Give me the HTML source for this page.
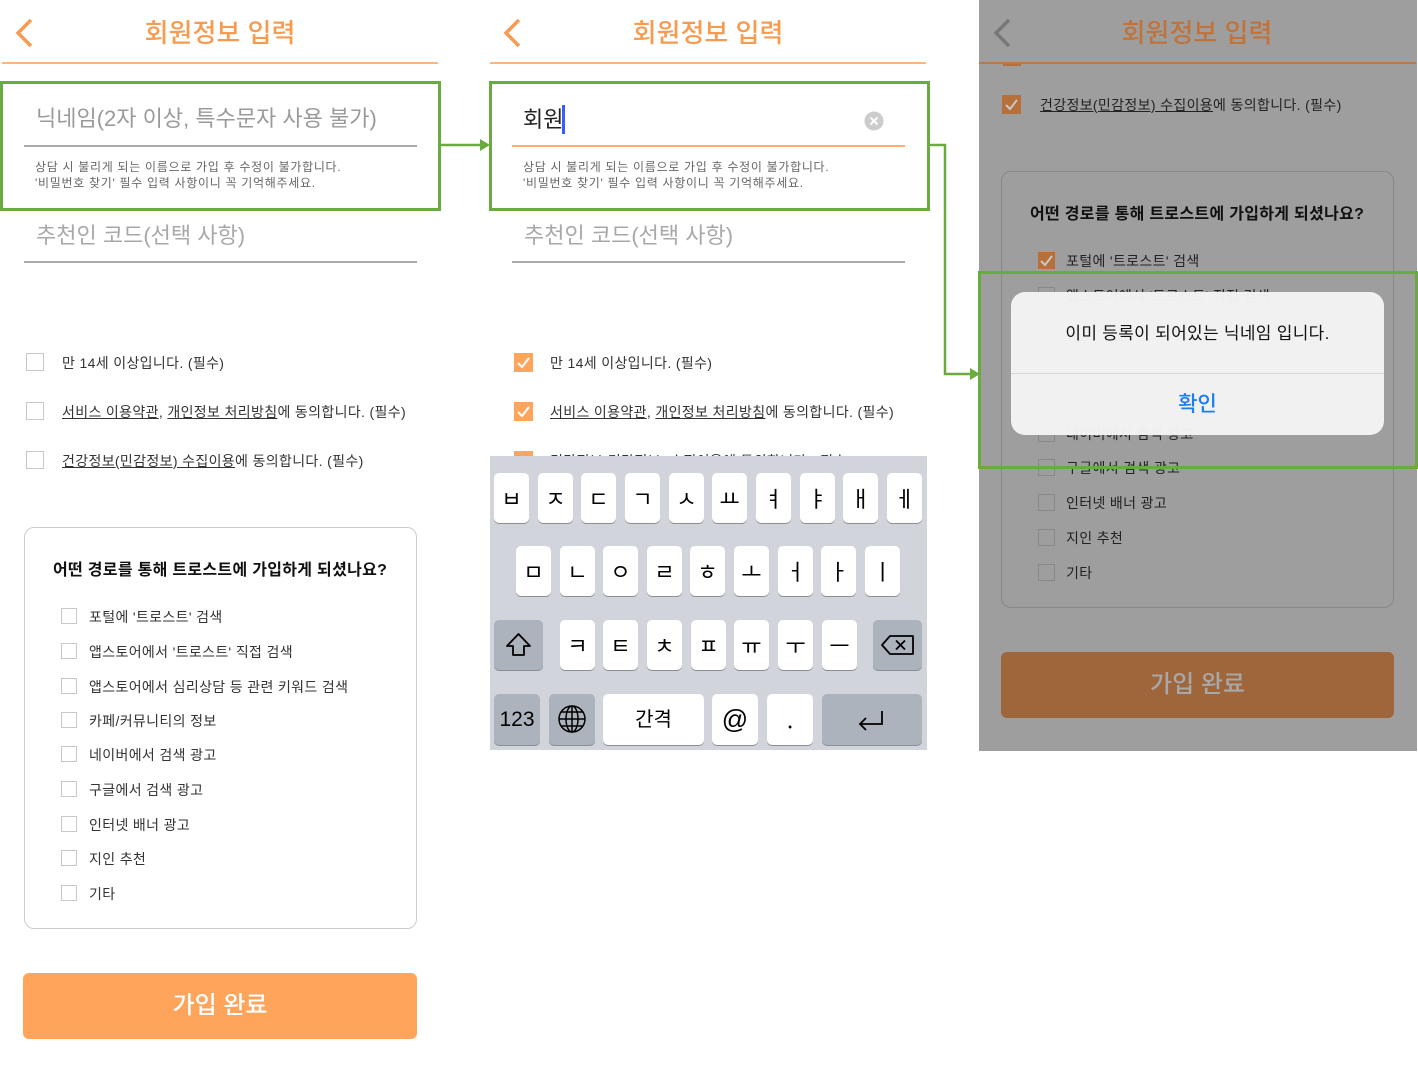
<!DOCTYPE html>
<html><head><meta charset="utf-8">
<style>
*{margin:0;padding:0;box-sizing:border-box}
body{width:1418px;height:1072px;background:#fff;position:relative;overflow:hidden;font-family:"Liberation Sans","Noto Sans CJK KR",sans-serif}
.a{position:absolute;white-space:nowrap}
.cb{position:absolute;width:18px;height:18px;border:1.5px solid #c8c8c8;background:#fff}
.cs{position:absolute;width:16px;height:16px;border:1.5px solid #c8c8c8;background:#fff}
.ck{position:absolute;background:#ffa55b}
.ck svg,.ckd svg{position:absolute;left:0;top:0}
.ckd{position:absolute;background:#b8703a}
.k{position:absolute;background:#fff;border-radius:5px;box-shadow:0 1px 0 #8a8d92;height:50px;width:35px;text-align:center;line-height:50px;font-size:22px;color:#000;font-family:"Noto Sans CJK KR",sans-serif}
.g{background:#adb3bc}
u{text-decoration:underline}
.t14{font-size:14px;line-height:20px;letter-spacing:0.35px}
.h12{font-size:12px;line-height:16px;color:#666;letter-spacing:0.7px}
</style></head><body>

<!-- PANEL 1 -->
<svg class="a" style="left:10px;top:14px" width="30" height="40"><polyline points="21,6 8,19 21,32" fill="none" stroke="#f79a52" stroke-width="3.5"/></svg>
<div class="a" style="left:0;top:16px;width:440px;text-align:center;font-size:26px;line-height:34px;color:#f89b4f;font-weight:500">회원정보 입력</div>
<div class="a" style="left:2px;top:62px;width:436px;height:2px;background:#fbb57f"></div>
<div class="a" style="left:36px;top:104px;font-size:22px;line-height:30px;color:#9a9a9a">닉네임(2자 이상, 특수문자 사용 불가)</div>
<div class="a" style="left:24px;top:145px;width:393px;height:1.5px;background:#aaa"></div>
<div class="a h12" style="left:35px;top:159px">상담 시 불리게 되는 이름으로 가입 후 수정이 불가합니다.<br>'비밀번호 찾기' 필수 입력 사항이니 꼭 기억해주세요.</div>
<div class="a" style="left:0;top:81px;width:441px;height:130px;border:3px solid #6aab3f"></div>
<div class="a" style="left:36px;top:221px;font-size:22px;line-height:30px;color:#a8a8a8">추천인 코드(선택 사항)</div>
<div class="a" style="left:24px;top:261px;width:393px;height:1.5px;background:#aaa"></div>

<div class="cb" style="left:26px;top:353px"></div>
<div class="a t14" style="left:62px;top:353px;color:#333">만 14세 이상입니다. (필수)</div>
<div class="cb" style="left:26px;top:402px"></div>
<div class="a t14" style="left:62px;top:402px;color:#333"><u>서비스 이용약관</u>, <u>개인정보 처리방침</u>에 동의합니다. (필수)</div>
<div class="cb" style="left:26px;top:451px"></div>
<div class="a t14" style="left:62px;top:451px;color:#333"><u>건강정보(민감정보) 수집이용</u>에 동의합니다. (필수)</div>

<div class="a" style="left:24px;top:527px;width:393px;height:402px;border:1.5px solid #ccc;border-radius:10px"></div>
<div class="a" style="left:53px;top:560px;font-size:16px;line-height:22px;color:#111;font-weight:bold;letter-spacing:0.3px">어떤 경로를 통해 트로스트에 가입하게 되셨나요?</div>
<div class="cs" style="left:61px;top:608px"></div><div class="a t14" style="left:89px;top:607px;color:#333">포털에 '트로스트' 검색</div>
<div class="cs" style="left:61px;top:643px"></div><div class="a t14" style="left:89px;top:642px;color:#333">앱스토어에서 '트로스트' 직접 검색</div>
<div class="cs" style="left:61px;top:678px"></div><div class="a t14" style="left:89px;top:677px;color:#333">앱스토어에서 심리상담 등 관련 키워드 검색</div>
<div class="cs" style="left:61px;top:712px"></div><div class="a t14" style="left:89px;top:711px;color:#333">카페/커뮤니티의 정보</div>
<div class="cs" style="left:61px;top:746px"></div><div class="a t14" style="left:89px;top:745px;color:#333">네이버에서 검색 광고</div>
<div class="cs" style="left:61px;top:781px"></div><div class="a t14" style="left:89px;top:780px;color:#333">구글에서 검색 광고</div>
<div class="cs" style="left:61px;top:816px"></div><div class="a t14" style="left:89px;top:815px;color:#333">인터넷 배너 광고</div>
<div class="cs" style="left:61px;top:850px"></div><div class="a t14" style="left:89px;top:849px;color:#333">지인 추천</div>
<div class="cs" style="left:61px;top:885px"></div><div class="a t14" style="left:89px;top:884px;color:#333">기타</div>

<div class="a" style="left:23px;top:973px;width:394px;height:66px;background:#ffa55b;border-radius:6px;text-align:center;line-height:66px;font-size:24px;color:#fff;font-weight:500">가입 완료</div>

<!-- arrows -->
<svg class="a" style="left:0;top:0" width="1418" height="1072">
<line x1="441" y1="145" x2="482" y2="145" stroke="#6aab3f" stroke-width="2.5"/>
<polygon points="480,139 490,145 480,151" fill="#6aab3f"/>
<polyline points="930,145 945,145 945,374 972,374" fill="none" stroke="#6aab3f" stroke-width="2.5"/>
<polygon points="970,368 980,374 970,380" fill="#6aab3f"/>
</svg>

<!-- PANEL 2 -->
<svg class="a" style="left:498px;top:14px" width="30" height="40"><polyline points="21,6 8,19 21,32" fill="none" stroke="#f79a52" stroke-width="3.5"/></svg>
<div class="a" style="left:488px;top:16px;width:440px;text-align:center;font-size:26px;line-height:34px;color:#f89b4f;font-weight:500">회원정보 입력</div>
<div class="a" style="left:490px;top:62px;width:436px;height:2px;background:#fbb57f"></div>
<div class="a" style="left:523px;top:105px;font-size:22px;line-height:30px;color:#222">회원</div>
<div class="a" style="left:562px;top:105px;width:2.5px;height:29px;background:#3a5cff"></div>
<svg class="a" style="left:864px;top:111px" width="20" height="20"><circle cx="10" cy="10" r="9.5" fill="#ccc"/><path d="M6.5 6.5L13.5 13.5M13.5 6.5L6.5 13.5" stroke="#fff" stroke-width="2"/></svg>
<div class="a" style="left:512px;top:145px;width:393px;height:2px;background:#ffad70"></div>
<div class="a h12" style="left:523px;top:159px">상담 시 불리게 되는 이름으로 가입 후 수정이 불가합니다.<br>'비밀번호 찾기' 필수 입력 사항이니 꼭 기억해주세요.</div>
<div class="a" style="left:489px;top:81px;width:441px;height:130px;border:3px solid #6aab3f"></div>
<div class="a" style="left:524px;top:221px;font-size:22px;line-height:30px;color:#a8a8a8">추천인 코드(선택 사항)</div>
<div class="a" style="left:512px;top:261px;width:393px;height:1.5px;background:#aaa"></div>

<div class="ck" style="left:514px;top:353px;width:19px;height:19px"><svg width="19" height="19"><polyline points="4,10 8,14 15,5" fill="none" stroke="#fff" stroke-width="2"/></svg></div>
<div class="a t14" style="left:550px;top:353px;color:#333">만 14세 이상입니다. (필수)</div>
<div class="ck" style="left:514px;top:402px;width:19px;height:19px"><svg width="19" height="19"><polyline points="4,10 8,14 15,5" fill="none" stroke="#fff" stroke-width="2"/></svg></div>
<div class="a t14" style="left:550px;top:402px;color:#333"><u>서비스 이용약관</u>, <u>개인정보 처리방침</u>에 동의합니다. (필수)</div>
<div class="ck" style="left:514px;top:451px;width:19px;height:19px"></div>
<div class="a t14" style="left:550px;top:451px;color:#333"><u>건강정보(민감정보) 수집이용</u>에 동의합니다. (필수)</div>

<!-- keyboard -->
<div class="a" style="left:490px;top:456px;width:437px;height:294px;background:#d1d4da"></div>
<div class="k" style="left:494px;top:473px">ㅂ</div>
<div class="k" style="left:538px;top:473px">ㅈ</div>
<div class="k" style="left:581px;top:473px">ㄷ</div>
<div class="k" style="left:625px;top:473px">ㄱ</div>
<div class="k" style="left:669px;top:473px">ㅅ</div>
<div class="k" style="left:712px;top:473px">ㅛ</div>
<div class="k" style="left:756px;top:473px">ㅕ</div>
<div class="k" style="left:800px;top:473px">ㅑ</div>
<div class="k" style="left:843px;top:473px">ㅐ</div>
<div class="k" style="left:887px;top:473px">ㅔ</div>
<div class="k" style="left:516px;top:546px">ㅁ</div>
<div class="k" style="left:560px;top:546px">ㄴ</div>
<div class="k" style="left:603px;top:546px">ㅇ</div>
<div class="k" style="left:647px;top:546px">ㄹ</div>
<div class="k" style="left:690px;top:546px">ㅎ</div>
<div class="k" style="left:734px;top:546px">ㅗ</div>
<div class="k" style="left:778px;top:546px">ㅓ</div>
<div class="k" style="left:821px;top:546px">ㅏ</div>
<div class="k" style="left:865px;top:546px">ㅣ</div>
<div class="k g" style="left:494px;top:620px;width:49px"><svg width="49" height="50"><path d="M24.5 14L13 26H19V35H30V26H36Z" fill="none" stroke="#000" stroke-width="1.8" stroke-linejoin="round"/></svg></div>
<div class="k" style="left:560px;top:620px">ㅋ</div>
<div class="k" style="left:603px;top:620px">ㅌ</div>
<div class="k" style="left:647px;top:620px">ㅊ</div>
<div class="k" style="left:691px;top:620px">ㅍ</div>
<div class="k" style="left:734px;top:620px">ㅠ</div>
<div class="k" style="left:778px;top:620px">ㅜ</div>
<div class="k" style="left:822px;top:620px">ㅡ</div>
<div class="k g" style="left:873px;top:620px;width:49px"><svg width="49" height="50"><path d="M9 25L17 16H40V34H17Z" fill="none" stroke="#000" stroke-width="1.8" stroke-linejoin="round"/><path d="M23 20.5L32 29.5M32 20.5L23 29.5" stroke="#000" stroke-width="1.8"/></svg></div>
<div class="k g" style="left:494px;top:694px;width:46px;height:51px;font-size:21px;line-height:52px;font-family:'Liberation Sans',sans-serif">123</div>
<div class="k g" style="left:549px;top:694px;width:46px;height:51px"><svg width="46" height="51"><g fill="none" stroke="#000" stroke-width="1.5"><circle cx="23" cy="25" r="13"/><ellipse cx="23" cy="25" rx="6" ry="13"/><line x1="23" y1="12" x2="23" y2="38"/><line x1="10" y1="25" x2="36" y2="25"/><path d="M12 18H34M12 32H34"/></g></svg></div>
<div class="k" style="left:603px;top:694px;width:101px;height:51px;font-size:20px;line-height:48px">간격</div>
<div class="k" style="left:712px;top:694px;width:46px;height:51px;font-size:26px;font-family:'Liberation Sans',sans-serif">@</div>
<div class="k" style="left:767px;top:694px;width:46px;height:51px;font-size:22px">.</div>
<div class="k g" style="left:822px;top:694px;width:100px;height:51px"><svg width="100" height="51"><path d="M60 17V30H38M44 24L38 30L44 36" fill="none" stroke="#000" stroke-width="1.8"/></svg></div>

<!-- PANEL 3 -->
<div class="a" style="left:979px;top:0;width:438px;height:751px;background:#9e9e9e"></div>
<svg class="a" style="left:988px;top:14px" width="30" height="40"><polyline points="21,6 8,19 21,32" fill="none" stroke="#777" stroke-width="3.5"/></svg>
<div class="a" style="left:978px;top:16px;width:438px;text-align:center;font-size:26px;line-height:34px;color:#c0733a;font-weight:500">회원정보 입력</div>
<div class="a" style="left:1003px;top:62px;width:18px;height:4px;background:#b8703a"></div>
<div class="a" style="left:979px;top:62px;width:437px;height:2px;background:#bd7840"></div>
<div class="ckd" style="left:1002px;top:95px;width:19px;height:19px"><svg width="19" height="19"><polyline points="4,10 8,14 15,5" fill="none" stroke="#c8c8c8" stroke-width="2"/></svg></div>
<div class="a t14" style="left:1040px;top:95px;color:#222"><u>건강정보(민감정보) 수집이용</u>에 동의합니다. (필수)</div>
<div class="a" style="left:1001px;top:171px;width:393px;height:437px;border:1.5px solid #888;border-radius:10px"></div>
<div class="a" style="left:1030px;top:204px;font-size:16px;line-height:22px;color:#111;font-weight:bold;letter-spacing:0.3px">어떤 경로를 통해 트로스트에 가입하게 되셨나요?</div>
<div class="ckd" style="left:1038px;top:252px;width:17px;height:17px"><svg width="17" height="17"><polyline points="3,9 7,13 14,4" fill="none" stroke="#c8c8c8" stroke-width="2"/></svg></div>
<div class="a t14" style="left:1066px;top:251px;color:#222">포털에 '트로스트' 검색</div>
<div class="a t14" style="left:1066px;top:286px;color:#222">앱스토어에서 '트로스트' 직접 검색</div>
<div class="a t14" style="left:1066px;top:424px;color:#222">네이버에서 검색 광고</div>
<div class="a" style="left:1038px;top:459px;width:17px;height:17px;border:1.5px solid #888"></div><div class="a t14" style="left:1066px;top:458px;color:#222">구글에서 검색 광고</div>
<div class="a" style="left:1038px;top:494px;width:17px;height:17px;border:1.5px solid #888"></div><div class="a t14" style="left:1066px;top:493px;color:#222">인터넷 배너 광고</div>
<div class="a" style="left:1038px;top:529px;width:17px;height:17px;border:1.5px solid #888"></div><div class="a t14" style="left:1066px;top:528px;color:#222">지인 추천</div>
<div class="a" style="left:1038px;top:564px;width:17px;height:17px;border:1.5px solid #888"></div><div class="a t14" style="left:1066px;top:563px;color:#222">기타</div>
<div class="a" style="left:1038px;top:287px;width:17px;height:17px;border:1.5px solid #888"></div>
<div class="a" style="left:1038px;top:425px;width:17px;height:17px;border:1.5px solid #888"></div>
<div class="a" style="left:1001px;top:652px;width:393px;height:66px;background:#9e663a;border-radius:6px;text-align:center;line-height:66px;font-size:24px;color:#a8a8a8;font-weight:500">가입 완료</div>

<div class="a" style="left:1011px;top:292px;width:373px;height:143px;background:rgba(244,244,244,0.97);border-radius:14px"></div>
<div class="a" style="left:1011px;top:322px;width:373px;text-align:center;font-size:17px;line-height:24px;color:#111;letter-spacing:0.3px">이미 등록이 되어있는 닉네임 입니다.</div>
<div class="a" style="left:1011px;top:373px;width:373px;height:1px;background:#d6d6d6"></div>
<div class="a" style="left:1011px;top:390px;width:373px;text-align:center;font-size:21px;line-height:30px;color:#1a7ef2;font-weight:500">확인</div>
<div class="a" style="left:978px;top:271px;width:440px;height:198px;border:3px solid #6aab3f"></div>

</body></html>
